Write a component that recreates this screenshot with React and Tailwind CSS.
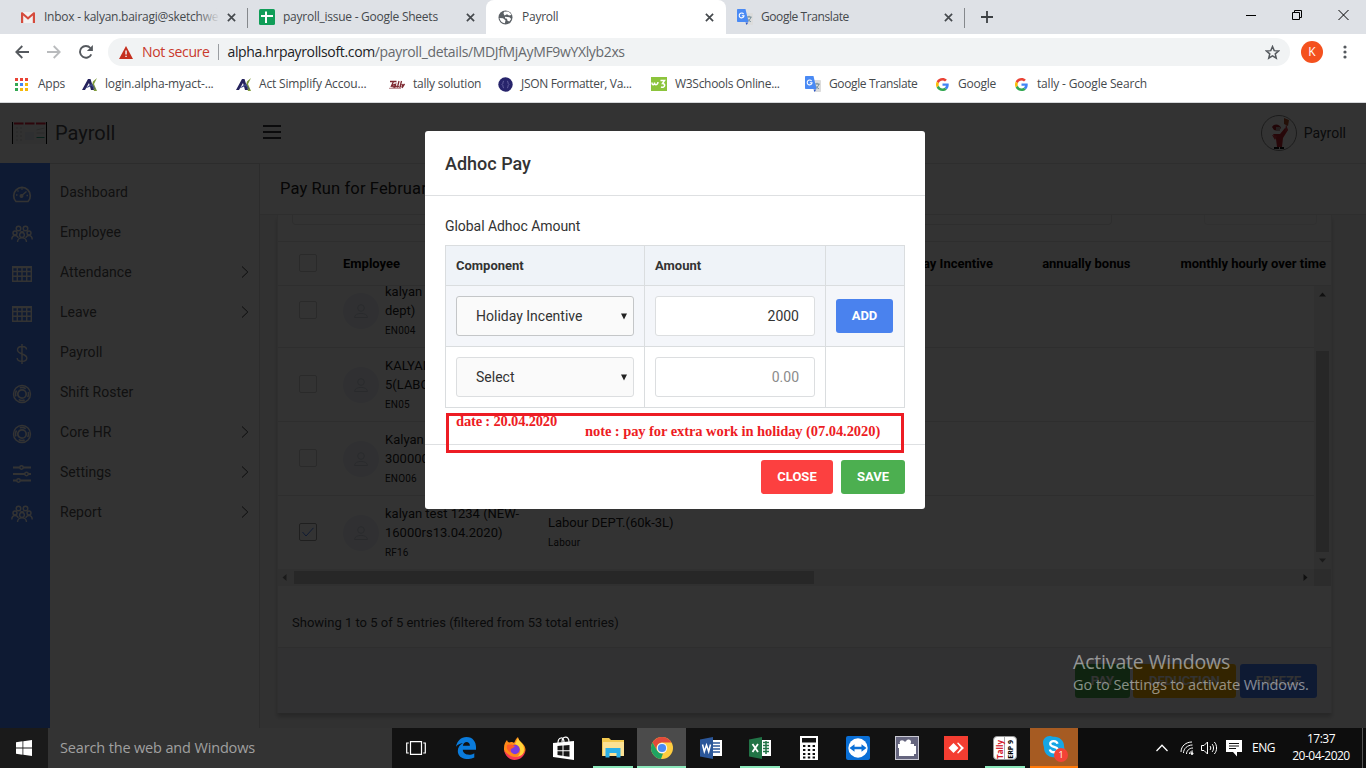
import React from "react";

const CloseX = () => (
  <svg width="9" height="9" viewBox="0 0 9 9" className="shrink-0" stroke="#45494d" strokeWidth="1.7">
    <path d="M.9.9l7.2 7.2M8.1.9L.9 8.1" />
  </svg>
);

const Translate = () => (
  <svg width="16" height="16" viewBox="0 0 16 16" className="shrink-0">
    <path d="M6 4h9.2a.8.8 0 0 1 .8.8v10.4a.8.8 0 0 1-.8.8H9.500z" fill="#dcdcdc" />
    <path d="M9.500 8h5M12 6.800V8M14 8c-.4 2-2 3.600-3.500 4.500M10.500 9.500c.6 1.500 2 2.500 3.300 3.200" stroke="#6f8a94" strokeWidth="1" fill="none" />
    <path d="M8.500 13.500h2.800L9.500 16z" fill="#2a56c6" />
    <path d="M.8 0h7.700l3 13H.8A.8.8 0 0 1 0 12.200V.8A.8.8 0 0 1 .8 0z" fill="#4a8af4" />
    <path d="M6.600 5.100A2.400 2.400 0 1 0 7 6.800H4.800" stroke="#fff" strokeWidth="1.100" fill="none" />
  </svg>
);

const GoogleG = () => (
  <svg width="13" height="13" viewBox="0 0 48 48" className="shrink-0">
    <path fill="#EA4335" d="M24 9.500c3.540 0 6.710 1.220 9.210 3.600l6.850-6.850C35.900 2.380 30.470 0 24 0 14.620 0 6.510 5.380 2.560 13.220l7.980 6.190C12.430 13.720 17.740 9.500 24 9.500z" />
    <path fill="#4285F4" d="M46.980 24.550c0-1.570-.15-3.090-.38-4.550H24v9.020h12.940c-.58 2.960-2.260 5.480-4.780 7.180l7.730 6c4.510-4.180 7.090-10.360 7.090-17.650z" />
    <path fill="#FBBC05" d="M10.530 28.590A14.500 14.500 0 0 1 9.770 24c0-1.600.27-3.140.76-4.590l-7.980-6.190A23.900 23.900 0 0 0 0 24c0 3.880.92 7.540 2.560 10.780l7.970-6.190z" />
    <path fill="#34A853" d="M24 48c6.480 0 11.930-2.130 15.890-5.810l-7.730-6c-2.150 1.450-4.920 2.300-8.160 2.300-6.260 0-11.570-4.220-13.470-9.910l-7.980 6.190C6.510 42.620 14.620 48 24 48z" />
  </svg>
);

const ActLogo = () => (
  <svg width="15" height="13" viewBox="0 0 15 13" className="shrink-0">
    <path d="M11 3.500L15 0l-3 6L15 13h-3l-2-6z" fill="#7f9a3a" />
    <path d="M0 12L6 1h2.500L12 12H9L7 5l-4 7z" fill="#25225c" />
    <path d="M2 11l8-5.500L14 12l-4.500-4z" fill="#3d4688" />
  </svg>
);

function TabStrip() {
  return (
    <div className="flex h-[34px] bg-[#dee1e6] text-[12px] text-[#45494d] tracking-[-0.250px]">
      <div className="relative flex w-[248px] items-center pl-[21px] pr-[11px]">
        <svg width="14" height="11" viewBox="0 0 14 11" className="shrink-0">
          <path d="M1 0h12v11H1z" fill="#f1f1f1" />
          <path d="M0 1.200C0 .4.8 0 1.500.3L7 5l5.500-4.700c.7-.3 1.500.1 1.500.9V11h-2.200V3.600L7 7.700 2.200 3.600V11H0z" fill="#d54b3d" />
        </svg>
        <div className="relative ml-[9px] w-[176px] overflow-hidden whitespace-nowrap">
          Inbox - kalyan.bairagi@sketchwe
          <div className="absolute inset-y-0 right-0 w-6 bg-linear-to-r from-transparent to-[#dee1e6]" />
        </div>
        <div className="ml-auto mr-px"><CloseX /></div>
        <div className="absolute right-0 top-2 h-5 w-px bg-[#85888c]" />
      </div>
      <div className="flex w-[238px] items-center pl-[11px] pr-[11px]">
        <svg width="16" height="16" viewBox="0 0 16 16" className="shrink-0">
          <rect width="16" height="16" rx="1.500" fill="#109d58" />
          <path d="M6 2.500h2v3.500h6v2H8v6H6V8H2V6h4z" fill="#fff" />
        </svg>
        <span className="ml-2">payroll_issue - Google Sheets</span>
        <div className="ml-auto"><CloseX /></div>
      </div>
      <div className="flex h-[34px] w-[240px] items-center rounded-t-lg bg-white pl-3 pr-[12px]">
        <svg width="15" height="15" viewBox="0 0 15 15" className="shrink-0">
          <circle cx="7.500" cy="7.500" r="7" fill="#5b6065" />
          <path d="M1.500 8l3.500.3 2.500 2-.6 3C4.200 13 2 11 1.500 8zM6 1.700l3.500-.2c2 .5 3.500 2 4 3.500l-2.500.5L9 4.300 6.500 5.500 5.500 3.500zM7 6.800l4.500.5 1.700 1.700-1.900 2.500-1.800-.7L9 8.700 7 8.200z" fill="#fff" />
        </svg>
        <span className="ml-[9px]">Payroll</span>
        <div className="ml-auto"><CloseX /></div>
      </div>
      <div className="relative flex w-[239px] items-center pl-[11px] pr-[12px]">
        <Translate />
        <span className="ml-2 tracking-[-0.420px]">Google Translate</span>
        <div className="ml-auto"><CloseX /></div>
        <div className="absolute right-0 top-2 h-5 w-px bg-[#85888c]" />
      </div>
      <div className="flex flex-1 items-center pl-4">
        <svg width="12" height="12" viewBox="0 0 12 12" stroke="#3c4043" strokeWidth="1.800"><path d="M6 0v12M0 6h12" /></svg>
        <div className="mb-[5px] ml-auto mr-[17px] flex items-center gap-9">
          <svg width="10" height="10" viewBox="0 0 10 10" stroke="#000"><path d="M0 5.500h10" /></svg>
          <svg width="10" height="10" viewBox="0 0 10 10" stroke="#000" fill="none"><path d="M.5 2.500h7v7h-7zM2.500 2.500v-2h7v7h-2" /></svg>
          <svg width="11" height="10" viewBox="0 0 11 10" stroke="#000" fill="none"><path d="M.5 0l10 10M10.500 0L.5 10" /></svg>
        </div>
      </div>
    </div>
  );
}

function Toolbar() {
  return (
    <div className="flex h-9 items-center bg-white pl-[15px]">
      <svg width="14" height="14" viewBox="0 0 14 14" fill="none" stroke="#55595e" strokeWidth="1.800"><path d="M14 7H1.500M7.300 1L1.300 7l6 6" /></svg>
      <svg width="14" height="14" viewBox="0 0 14 14" fill="none" stroke="#b9bbbd" strokeWidth="1.800" className="ml-[18px]"><path d="M0 7h12.500M6.700 1l6 6-6 6" /></svg>
      <svg width="14" height="14" viewBox="0 0 14 14" className="ml-[18px]"><path d="M12.300 9.300A5.900 5.900 0 1 1 11.400 3" fill="none" stroke="#55595e" strokeWidth="1.900" /><path d="M13.900 0v6H7.900z" fill="#55595e" /></svg>
      <div className="ml-[15px] flex h-7 w-[1182px] items-center rounded-full bg-[#f1f3f4] pl-[11px] pr-[10px] text-[14px] tracking-[-0.350px] whitespace-pre">
        <svg width="14" height="13" viewBox="0 0 14 13"><path d="M7 0l7 13H0z" fill="#c5301f" /><path d="M6.300 4.500h1.500v4H6.300zM6.300 9.700h1.500v1.400H6.300z" fill="#f1f3f4" /></svg>
        <span className="mb-px ml-[9px] text-[#c9392c]">Not secure</span>
        <div className="ml-2 mr-[9px] h-4 w-px bg-[#9a9da1]" />
        <span className="mb-px text-[#202124]">alpha.hrpayrollsoft.com<span className="text-[#66696d]">/payroll_details/MDJfMjAyMF9wYXlyb2xs</span></span>
        <svg width="15" height="15" viewBox="0 0 24 24" className="ml-auto" fill="none" stroke="#55595e" strokeWidth="2.400"><path d="M12 2.500l2.700 6.500 7 .6-5.300 4.600 1.600 6.900-6-3.700-6 3.700 1.600-6.900L2.300 9.600l7-.6z" /></svg>
      </div>
      <div className="ml-[11px] flex size-[22px] items-center justify-center rounded-full bg-[#f4511e] text-[12px] text-white">K</div>
      <svg width="4" height="14" viewBox="0 0 4 14" fill="#55595e" className="ml-5"><circle cx="2" cy="2" r="1.600" /><circle cx="2" cy="7" r="1.600" /><circle cx="2" cy="12" r="1.600" /></svg>
    </div>
  );
}

const Mark = ({ icon, label, w, gap = "ml-2", track = "" }) => (
  <div className={"flex shrink-0 items-center " + w}>
    {icon}
    <span className={"whitespace-nowrap " + gap + " " + track}>{label}</span>
  </div>
);

function Bookmarks() {
  const dots = ["#e94335", "#e94335", "#e94335", "#34a853", "#4285f4", "#f6b90a", "#34a853", "#f6b90a", "#f6b90a"];
  return (
    <div className="flex h-[33px] border-b border-[#d5d7da] bg-white pb-[4px] pl-[15px] text-[12px] text-[#45494d]">
      <Mark w="w-[67px]" gap="ml-[10px]" track="tracking-[-0.220px]" label="Apps" icon={
        <div className="grid grid-cols-3 gap-[2px]">
          {dots.map((c, i) => <svg key={i} width="3" height="3"><rect width="3" height="3" fill={c} /></svg>)}
        </div>} />
      <Mark w="w-[154px]" track="tracking-[-0.180px]" label="login.alpha-myact-..." icon={<ActLogo />} />
      <Mark w="w-[153px]" track="tracking-[-0.180px]" label="Act Simplify Accou..." icon={<ActLogo />} />
      <Mark w="w-[109px]" track="tracking-[-0.220px]" label="tally solution" icon={
        <svg width="16" height="9" viewBox="0 0 16 9" className="shrink-0" fill="none" stroke="#7d2830" strokeWidth="1.300">
          <path d="M1 1.500h6.500M4.500 1.500L2 7M6 4.500c-2-.5-3 2.500-1.500 2.500S6 5 6.500 4.500L6 7 8 6M10 1L8.500 7l1.500-.5M12.500 1l-1.500 6 1.500-.5M13 4l.5 2L15.500 4 13 8" />
          <path d="M0 8.300h12" strokeWidth=".6" />
        </svg>} />
      <Mark w="w-[153px]" track="tracking-[-0.310px]" label="JSON Formatter, Va..." icon={
        <svg width="15" height="15" viewBox="0 0 15 15" className="shrink-0"><circle cx="7.500" cy="7.500" r="7.200" fill="#27246b" /><path d="M6 4C4.500 4 5.500 7 4 7.500 5.500 8 4.500 11 6 11M9 4c1.500 0 .5 3 2 3.500C9.500 8 10.500 11 9 11" fill="none" stroke="#6d6aa5" strokeWidth=".9" /></svg>} />
      <Mark w="w-[154px]" track="tracking-[-0.290px]" label="W3Schools Online..." icon={
        <svg width="16" height="14" viewBox="0 0 16 14" className="shrink-0"><rect width="16" height="14" fill="#8cc43c" /><path d="M1 5.500c0 3 2.500 3 2.500 0 0 3 3 3 3.500-.5M9.500 3.500h4L11.500 6.500c3.500 0 2.500 5-1.500 3.500" fill="none" stroke="#fff" strokeWidth="1.500" /></svg>} />
      <Mark w="w-[131px]" track="tracking-[-0.380px]" label="Google Translate" icon={<Translate />} />
      <Mark w="w-[79px]" gap="ml-[9px]" track="tracking-[-0.220px]" label="Google" icon={<GoogleG />} />
      <Mark w="w-[150px]" gap="ml-[9px]" track="tracking-[-0.180px]" label="tally - Google Search" icon={<GoogleG />} />
    </div>
  );
}

const S = ({ children }) => (
  <svg width="20" height="20" viewBox="0 0 20 20" fill="none" stroke="#fff" strokeWidth="1.400">{children}</svg>
);
const Gauge = () => (
  <S><path d="M4 17.500a8.300 8.300 0 1 1 12 0z" strokeWidth="1.700" /><path d="M9.500 11.800l5-4.300M4 11h1.500M5.500 6.500l1 1M10 4.200v1.500M14.500 11.500H16" /><circle cx="9.500" cy="12" r="1.300" fill="#fff" /></S>
);
const People = () => (
  <svg width="22" height="18" viewBox="0 0 22 18" fill="none" stroke="#fff" strokeWidth="1.400">
    <circle cx="7.500" cy="3.500" r="2.300" /><circle cx="14.500" cy="3.500" r="2.300" /><circle cx="4" cy="8" r="2" /><circle cx="18" cy="8" r="2" /><circle cx="11" cy="10" r="2.400" />
    <path d="M.8 14.500c0-5 6-5 6.300-1.500M21.200 14.500c0-5-6-5-6.300-1.500M6.500 17c.3-5.500 8.700-5.500 9 0M9 7.500c1-1 3-1 4 0" />
  </svg>
);
const Grid = () => (
  <svg width="20" height="16" viewBox="0 0 20 16" fill="none" stroke="#fff" strokeWidth="1.400">
    <path d="M.7.700h18.600v14.600H.7zM0 1.500h20M0 5.500h20M0 10.300h20M5.300 1v14M10 1v14M14.700 1v14" />
  </svg>
);
const Dollar = () => <S><path d="M10 0v20M14.500 5.500C14.300 1.500 5.500 1.500 5.500 6c0 4.500 9.300 3.500 9.300 8 0 4.500-9.500 4.500-9.600 0" /></S>;
const Ring = () => <S><circle cx="10" cy="10" r="8.500" /><circle cx="10" cy="10" r="4.200" strokeWidth="1.700" /><circle cx="10" cy="10" r="6.500" strokeDasharray="6.200 4" strokeDashoffset="3" strokeWidth="1.600" /></S>;
const Sliders = () => <S><path d="M1 3.500h18M1 10h18M1 16.500h18" strokeWidth="1.800" /><g fill="#4680ff"><circle cx="9.500" cy="3.500" r="1.700" /><circle cx="14.500" cy="10" r="1.700" /><circle cx="6.500" cy="16.500" r="1.700" /></g></S>;

const menu = [
  ["Dashboard", Gauge, false], ["Employee", People, false], ["Attendance", Grid, true], ["Leave", Grid, true],
  ["Payroll", Dollar, false], ["Shift Roster", Ring, false], ["Core HR", Ring, true], ["Settings", Sliders, true], ["Report", People, true],
];

const rows = [
  ["kalyan", "dept)", "EN004"],
  ["KALYAN", "5(LABOUR)", "EN05"],
  ["Kalyan", "300000)", "ENO06"],
  ["kalyan test 1234 (NEW-", "16000rs13.04.2020)", "RF16", true],
];

const Box = ({ on, shift = "" }) => (
  <div className={"flex size-[18px] shrink-0 items-center justify-center rounded-[2px] border " + (on ? "border-[#999] " : "border-[#d0d0d0] ") + shift}>
    {on && <svg width="12" height="10" viewBox="0 0 12 10" fill="none" stroke="#4680ff"><path d="M.5 5l3.500 4L11.500.8" /></svg>}
  </div>
);

const Tri = ({ d, c = "#505050", w = 7, h = 7 }) => <svg width={w} height={h} viewBox={`0 0 ${w} ${h}`} fill={c}><path d={d} /></svg>;

function PayrollPage() {
  return (
    <div className="flex h-full flex-col bg-white font-['Roboto',sans-serif] text-[#373a3c]">
      <div className="flex h-[60px] shrink-0 items-center pl-3 pr-5">
        <svg width="35" height="22" viewBox="0 0 35 22">
          <rect width="35" height="22" fill="#f4f4f4" /><path d="M.5 0v22M34.500 0v22" stroke="#000" />
          <path d="M2 1.500h9.500M13 1.500h9.500M24 1.500h9.500" stroke="#e1203c" strokeWidth="2" />
          <path d="M4 6h2M8 6h2M4 10h2M8 10h2M4 14h2M8 14h2M4 18h2M8 18h2" stroke="#ccc" /><path d="M13 10h9v8h-9z" fill="#e4e9f5" /><path d="M24.500 8l8-2M24.500 11h8" stroke="#ccc" /><path d="M24.500 15.500h8" stroke="#2aa889" />
        </svg>
        <span className="ml-[8px] text-[20px] text-[#4a4d50]">Payroll</span>
        <svg width="18" height="14" viewBox="0 0 18 14" stroke="#373a3c" strokeWidth="2" className="-mt-[2px] ml-[148px]"><path d="M0 1h18M0 7h18M0 13h18" /></svg>
        <svg width="36" height="36" viewBox="0 0 36 36" className="ml-auto">
          <circle cx="18" cy="18" r="17.500" fill="#fff" stroke="#888" />
          <path d="M12 19l3 5 1 8h5l1-9 5-8-3-2-5 6z" fill="#c4262e" /><path d="M11 12c2-4 8-3 9 1l-3 3-4-1z" fill="#a3202a" /><path d="M15 12h4v4h-4z" fill="#b99" /><path d="M23 3l5 2-1 6-4-2z" fill="#b5502c" /><path d="M25 9l2 6-3 2zM11 20l5 1-2 4z" fill="#d53842" /><path d="M13 33h5M19 33h4" stroke="#111" strokeWidth="2" />
        </svg>
        <span className="ml-[7px] text-[14px]">Payroll</span>
      </div>
      <div className="flex min-h-0 flex-1">
        <div className="flex w-[50px] shrink-0 flex-col bg-[#4680ff] pr-[6px] pt-[11px]">
          {menu.map(([n, Icon], i) => <div key={i} className="flex h-10 items-center justify-center"><Icon /></div>)}
        </div>
        <div className="w-[210px] shrink-0 border-r border-t border-[#ddd] pt-[8px] text-[#555]">
          {menu.map(([n, , arrow], i) => (
            <div key={i} className="flex h-10 items-center justify-between pl-[10px] pr-[10px] text-[14px] tracking-[0.030px]">
              <span>{n}</span>
              {arrow && <svg width="8" height="12" viewBox="0 0 8 12" fill="none" stroke="#373a3c" className="mb-px"><path d="M1 .5L6.800 6 1 11.500" /></svg>}
            </div>
          ))}
        </div>
        <div className="flex min-w-0 flex-1 flex-col bg-[#f5f5f5]">
          <div className="flex h-[52px] shrink-0 items-center border-y border-[#e3e3e3] bg-white pl-5 text-[16.500px] tracking-[0.120px] text-[#222]">Pay Run for February 2020</div>
          <div className="mb-[15px] ml-[17px] mr-[34px] flex min-h-0 flex-1 flex-col border-x border-[#ececec] bg-white shadow-[0_4px_4px_rgba(0,0,0,0.2)]">
            <div className="flex h-[26px] shrink-0 items-start gap-[92px] px-[14px]">
              <div className="h-[10px] w-[820px] rounded-b border border-t-0 border-[#e6e6e6]" />
              <div className="h-[10px] flex-1 rounded-b border border-t-0 border-[#f0f0f0]" />
            </div>
            <div className="flex h-[45px] shrink-0 items-center border-y border-[#e3e3e3] pl-[21px] pr-[5px] text-[13px] font-bold text-black">
              <Box shift="-mt-[2px]" />
              <span className="ml-[26px]">Employee</span>
              <span className="ml-auto w-[112px] text-right">Holiday Incentive</span>
              <span className="ml-[49px]">annually bonus</span>
              <span className="ml-[50px]">monthly hourly over time</span>
            </div>
            <div className="flex h-[283px] shrink-0">
              <div className="flex min-w-0 flex-1 flex-col justify-end overflow-hidden">
                {rows.map(([a, b, code, on], i) => (
                  <div key={i} className="flex h-[74px] shrink-0 items-center border-t border-[#e3e3e3] pl-[21px] pt-px">
                    <Box on={on} shift="-mt-[2px]" />
                    <div className="ml-[26px] flex size-9 shrink-0 items-center justify-center rounded-full bg-[#edf0fa]">
                      <svg width="14" height="14" viewBox="0 0 14 14" fill="none" stroke="#cdd0dc"><circle cx="7" cy="4" r="3.300" /><path d="M.5 13.500C.5 8 13.500 8 13.500 13.500z" /></svg>
                    </div>
                    <div className="ml-[6px] w-[163px] whitespace-nowrap pt-px text-[13px] leading-[19px] text-[#222]">
                      <div>{a}</div><div>{b}</div><div className="mt-px text-[10px] leading-[20px] tracking-[0.180px]">{code}</div>
                    </div>
                    {on && <div className="text-[13px] leading-[20px] text-[#222]"><div>Labour DEPT.(60k-3L)</div><div className="text-[10px] tracking-[0.200px]">Labour</div></div>}
                  </div>
                ))}
              </div>
              <div className="flex w-[17px] shrink-0 flex-col items-center bg-[#f1f1f1]">
                <div className="flex h-[17px] items-center"><Tri d="M0 5.500L3.500 1.500 7 5.500z" /></div>
                <div className="mt-[48px] h-[201px] w-[13px] bg-[#c1c1c1]" />
                <div className="mt-auto flex h-[17px] items-center"><Tri d="M0 1.500h7L3.500 5.500z" c="#808080" /></div>
              </div>
            </div>
            <div className="flex h-[17px] shrink-0 items-center bg-[#f1f1f1]">
              <div className="flex w-4 justify-center pr-[3px]"><Tri d="M5.500 0v7L1.500 3.500z" c="#808080" /></div>
              <div className="h-[13px] w-[520px] bg-[#c1c1c1]" />
              <div className="ml-auto flex w-[17px] justify-center"><Tri d="M1.500 0v7L5.500 3.500z" /></div>
              <div className="h-[17px] w-[17px] bg-[#dcdcdc]" />
            </div>
            <div className="flex h-[62px] shrink-0 items-center border-b border-[#e3e3e3] pl-[14px] pt-[12px] text-[13px]">Showing 1 to 5 of 5 entries (filtered from 53 total entries)</div>
            <div className="flex flex-1 items-center justify-end bg-[#f5f6fa] pr-[14px] text-[13px] font-bold text-white">
              <div className="mr-[3px] flex h-[34px] w-[55px] items-center justify-center rounded-[3px] bg-[#4caf50]">PAY</div>
              <div className="mr-1 flex h-[34px] w-[103px] items-center justify-center rounded-[3px] bg-[#ffb400]">DEDUCTION</div>
              <div className="flex h-[34px] w-[77px] items-center justify-center rounded-[3px] bg-[#4680ff]">FREEZE</div>
            </div>
          </div>
        </div>
      </div>
    </div>
  );
}

const Select = ({ label, active }) => (
  <div className={"flex h-10 items-center justify-between rounded-[3px] border bg-[#fafafa] pl-[19px] pr-[6px] text-[14px] " + (active ? "border-[#c4c6c8]" : "border-[#dcdee0]")}>
    {label}
    <svg width="6" height="7" viewBox="0 0 6 7" fill="#222"><path d="M0 .500h6L3 6.500z" /></svg>
  </div>
);

function AdhocModal() {
  return (
    <div className="absolute left-[425px] top-[28px] flex h-[378px] w-[500px] flex-col rounded-[3px] bg-white font-['Roboto',sans-serif] text-[#333]">
      <div className="flex h-[65px] shrink-0 items-center border-b border-[#dee0e2] pl-5 text-[18px] font-medium">Adhoc Pay</div>
      <div className="h-[249px] shrink-0 border-b border-[#dee0e2] px-5 pt-[20px]">
        <div className="h-[29px] text-[14px] leading-[21px] tracking-[-0.050px]">Global Adhoc Amount</div>
        <div className="grid w-[460px] grid-cols-[199px_181px_79px] grid-rows-[40px_61px_61px] border-r border-b border-[#dadddf] [&>div]:border-l [&>div]:border-t [&>div]:border-[#dadddf]">
          <div className="flex items-center bg-[#eff3f8] pl-[10px] text-[13px] font-bold">Component</div>
          <div className="flex items-center bg-[#eff3f8] pl-[10px] text-[13px] font-bold">Amount</div>
          <div className="bg-[#eff3f8]" />
          <div className="bg-[#f4f6fa] p-[10px]"><Select label="Holiday Incentive" active /></div>
          <div className="bg-[#f4f6fa] p-[10px]"><div className="flex h-10 items-center justify-end rounded-[3px] border border-[#dcdee0] bg-white pr-[15px] text-[14px]">2000</div></div>
          <div className="bg-[#f4f6fa] px-[10px] py-[13px]"><div className="flex h-[34px] w-[57px] items-center justify-center rounded-[3px] bg-[#4a82ee] text-[13px] font-bold text-white">ADD</div></div>
          <div className="p-[10px]"><Select label="Select" /></div>
          <div className="p-[10px]"><div className="flex h-10 items-center justify-end rounded-[3px] border border-[#dcdee0] bg-white pr-[15px] text-[14px] text-[#8b8b8b]">0.00</div></div>
          <div />
        </div>
      </div>
      <div className="flex justify-end gap-2 pr-5 pt-[15px] text-[13px] font-bold text-white">
        <div className="flex h-[34px] w-[72px] items-center justify-center rounded-[3px] bg-[#fc4040]">CLOSE</div>
        <div className="flex h-[34px] w-[64px] items-center justify-center rounded-[3px] bg-[#4caf50]">SAVE</div>
      </div>
      <div className="absolute left-[21px] top-[282px] flex h-[40px] w-[458px] border-[3px] border-[#ed1c24] font-['Liberation_Serif',serif] text-[14.500px] font-bold leading-4 text-[#ed1c24] whitespace-nowrap">
        <span className="ml-[7px] mt-[-3px] w-[129px] tracking-[-0.170px]">date : 20.04.2020</span>
        <span className="mt-[7px] tracking-[-0.070px]">note : pay for extra work in holiday (07.04.2020)</span>
      </div>
    </div>
  );
}

const TaskApp = ({ children, bg = "", line = "" }) => (
  <div className={"relative flex h-10 w-[49px] shrink-0 items-center justify-center " + bg}>
    {children}
    {line && <div className={"absolute bottom-0 h-[2px] " + line} />}
  </div>
);

function Taskbar() {
  return (
    <div className="flex h-10 bg-[#0d0d0d] text-white">
      <div className="flex w-12 items-center justify-center bg-[#1a1a1a]">
        <svg width="16" height="16" viewBox="0 0 16 16" fill="#fff"><path d="M0 2.300L6.500 1.300v6.300H0zM7.300 1.200L16 0v7.600H7.300zM0 8.400h6.500v6.300L0 13.700zM7.300 8.400H16V16l-8.700-1.200z" /></svg>
      </div>
      <div className="flex w-[344px] items-center bg-[#333] pl-3 text-[14.500px] tracking-[-0.150px] text-[#a0a0a0]">Search the web and Windows</div>
      <div className="flex w-[638px] bg-[#121212] text-white">
        <TaskApp>
          <svg width="20" height="14" viewBox="0 0 20 14" fill="none" stroke="#fff" strokeWidth="1.200" className="mr-px"><path d="M4.500.700h11v12.600h-11zM2.800 2H.7v10h2.100M17.200 2h2.100v10h-2.100" /></svg>
        </TaskApp>
        <TaskApp>
          <svg width="20" height="22" viewBox="0 0 20 22"><path d="M0 9.800C1 4 5 0 10.500 0 17 0 20 5 20 10v2.800H6.800c.3 5.200 7.200 6.200 11.500 3.400v4.300C11 24 1.800 21.500 1.800 14c0-3.500 2-6.500 5.200-8C4.300 6.200 1.500 7.700 0 9.800zM6.900 8.800h7C14 3.500 7.200 4 6.900 8.800z" fill="#0a7bdb" /></svg>
        </TaskApp>
        <TaskApp>
          <svg width="23" height="23" viewBox="0 0 23 23">
            <path d="M1 11c0-4 1.500-6 3-8 .5 1.500 1 2 2 2.500C8 4.500 10 5 11 6c1-2 2-4.500 4-6 .5 3 2 4 4 6 2 1.700 3.500 4 3.500 7A11 10.500 0 0 1 1 13z" fill="#ff8a18" />
            <path d="M15 1c.5 3 6 5 6 11s-4 9.500-9 9.500C20 17 18 9 12 7c1-2 2-4 3-6z" fill="#ffd43a" />
            <path d="M1 13c1 5.500 5 10 10.500 10S22 19 22.500 13c-2 5-6 7-10.500 7S3 16 1 13z" fill="#f83a53" />
            <circle cx="12" cy="12.500" r="4.700" fill="#7b3be0" /><path d="M4 8c3-1 6-.5 8 1.500l-3 2c-2 0-2 3-1 4-3-1-5-4-4-7.500z" fill="#ff5a28" />
          </svg>
        </TaskApp>
        <TaskApp>
          <svg width="21" height="24" viewBox="0 0 21 24"><path d="M0 7l21-2v19L0 21z" fill="#fff" /><path d="M5 7c0-6 6-7 6-1M9 6c0-6 7-7 7 0" fill="none" stroke="#fff" strokeWidth="1.200" /><path d="M4.500 10l5-.4v4.700h-5zM10.500 9.500l6-.5v5.300h-6zM4.500 15.300h5v4.500l-5-.7zM10.500 15.300h6v5.500l-6-.8z" fill="#161616" /></svg>
        </TaskApp>
        <TaskApp line="w-10 bg-[#8ce8bb]">
          <svg width="22" height="20" viewBox="0 0 22 20"><path d="M0 0h7l2 2h13v16H0z" fill="#f3c94f" /><path d="M1 4h21v14H1z" fill="#fbe194" /><path d="M3.500 10h15v9.500h-4V15h-7v4.500h-4z" fill="#2bb0e8" /></svg>
        </TaskApp>
        <TaskApp bg="bg-[#4b4b4b]" line="w-[49px] bg-[#8ce8bb]">
          <svg width="22" height="22" viewBox="0 0 22 22"><circle cx="11" cy="11" r="11" fill="#ffcd40" /><path d="M1.500 5.500A11 11 0 0 1 20.500 5.500H11a5.500 5.500 0 0 0-4.800 8.200z" fill="#e24a3b" /><path d="M1.500 5.500l4.700 8.200A5.500 5.500 0 0 0 12 16.400L10 22A11 11 0 0 1 1.500 5.500z" fill="#1fa463" /><circle cx="11" cy="11" r="5.200" fill="#f4f4f4" /><circle cx="11" cy="11" r="4.100" fill="#4a89f3" /></svg>
        </TaskApp>
        <TaskApp>
          <svg width="22" height="22" viewBox="0 0 22 22"><path d="M11 3h11v16H11z" fill="#fff" /><path d="M13 6h7M13 9h7M13 12h7M13 15h7" stroke="#2b579a" strokeWidth="1.300" /><path d="M0 2.500L13 0v22L0 19.500z" fill="#2b579a" /><path d="M2.500 7.500l1.800 7L6.500 8l2.200 6.500 1.800-7" fill="none" stroke="#fff" strokeWidth="1.500" /></svg>
        </TaskApp>
        <TaskApp line="w-10 bg-[#8ce8bb]">
          <svg width="22" height="22" viewBox="0 0 22 22"><path d="M11 3h11v16H11z" fill="#fff" /><path d="M14 5.500h6M14 8.500h6M14 11.500h6M14 14.500h6M17 4v13" stroke="#217346" strokeWidth="1.500" /><path d="M0 2.500L13 0v22L0 19.500z" fill="#217346" /><path d="M3.500 7l5.500 8M9 7l-5.500 8" stroke="#fff" strokeWidth="1.800" /></svg>
        </TaskApp>
        <TaskApp>
          <svg width="18" height="24" viewBox="0 0 18 24"><path d="M0 0h18v24H0z" fill="#fff" /><path d="M2 2h14v4.500H2z" fill="#111" /><path d="M3 10h12M3 14h12M3 18h12M3 21.500h12" stroke="#111" strokeWidth="2.200" strokeDasharray="2.400 2.400" /></svg>
        </TaskApp>
        <TaskApp>
          <svg width="24" height="24" viewBox="0 0 24 24"><rect width="24" height="24" rx="2" fill="#0a6fd6" /><circle cx="12" cy="12" r="9.700" fill="#fff" /><path d="M3.500 12l5-3.700v2.400h7V8.300l5 3.700-5 3.700v-2.400h-7v2.400z" fill="#0a6fd6" /></svg>
        </TaskApp>
        <TaskApp>
          <svg width="24" height="24" viewBox="0 0 24 24"><rect x=".5" y=".5" width="23" height="23" fill="#65657e" stroke="#c9c9d3" /><path d="M3 8h2V5.500h9V8h5v12H4V12H3zM19 10h2v8h-2z" fill="#fff" /><circle cx="7" cy="6.500" r="2.300" fill="#fff" /><circle cx="13.500" cy="6" r="2.500" fill="#fff" /></svg>
        </TaskApp>
        <TaskApp>
          <svg width="24" height="24" viewBox="0 0 24 24"><rect width="24" height="24" fill="#f43d31" /><path d="M9.500 7l5 5-5 5-5-5z" fill="#fff" /><path d="M13 7l1.200-.5L20 12l-5.800 5.500L13 17l4-5z" fill="#fff" /></svg>
        </TaskApp>
        <TaskApp line="w-10 bg-[#8ce8bb]">
          <div className="flex h-6 w-6 rounded-sm border border-[#999] bg-white text-[8px] font-bold leading-[11px]">
            <span className="w-[11px] border-r border-[#aaa] text-[#d4202c] [writing-mode:sideways-lr]">Tally</span>
            <span className="w-[11px] text-[7px] text-black [writing-mode:sideways-lr]">ERP 9</span>
          </div>
        </TaskApp>
      </div>
      <div className="relative flex w-12 items-center justify-center border-b-2 border-[#ff7a0a] bg-[#a65b22]">
        <svg width="22" height="22" viewBox="0 0 22 22"><path d="M6.500 0c2 0 3 .8 5 .8 5 0 9.500 4 9.500 9 0 2 .8 3 .8 5.500 0 3.500-3 6.700-6.500 6.700-2 0-3-.8-5-.8C5 21.200 1 17 1 12c0-2-1-3-1-5.500C0 3 3 0 6.500 0z" fill="#16a6e4" /><path d="M14.500 7.800C13.500 4 7 4.500 7.200 8c.2 3.800 7.500 2 7.500 5.700 0 3.300-7 3.500-7.900-.2" fill="none" stroke="#fff" strokeWidth="2.300" /></svg>
        <div className="absolute bottom-[4px] right-[10px] flex size-[14px] items-center justify-center rounded-full bg-[#f44336] text-[9px]">1</div>
      </div>
      <div className="flex flex-1 items-center pl-[78px]">
        <svg width="12" height="8" viewBox="0 0 12 8" fill="none" stroke="#fff" strokeWidth="1.300"><path d="M.5 7L6 1.300 11.500 7" /></svg>
        <svg width="14" height="14" viewBox="0 0 14 14" fill="none" stroke="#fff" className="ml-[12px]"><path d="M1 11C1 5 6 1 12 1M3.500 12c0-4.500 4-8 9-8M6.500 13c0-3 2.500-6 6.500-6M9.500 13c0-1.500 1-3 3.500-3" /><circle cx="12" cy="12.500" r="1" fill="#fff" /></svg>
        <svg width="17" height="14" viewBox="0 0 17 14" fill="none" stroke="#fff" className="ml-[7px]"><path d="M.5 4.500H3L6.500 1v12L3 9.500H.5zM9 5c1 1 1 3 0 4M11 3c2 2 2 6 0 8M13.300 1c3 3 3 9 0 12" /></svg>
        <svg width="16" height="17" viewBox="0 0 16 17" className="ml-2"><path d="M0 0h16v12h-5v4.500L7 12H0z" fill="#fff" /><path d="M3 3.500h10M3 6h10M3 8.500h7" stroke="#111" /></svg>
        <span className="ml-[10px] w-[24px] text-[12px] tracking-[-0.500px]">ENG</span>
        <div className="-mt-[2px] ml-[14px] w-[62px] text-center text-[12px] leading-[17px] tracking-[-0.520px]"><div>17:37</div><div>20-04-2020</div></div>
        <div className="ml-auto mr-[3px] h-10 w-px bg-[#555]" />
      </div>
    </div>
  );
}

export default function App() {
  return (
    <div className="flex h-[768px] w-[1366px] flex-col overflow-hidden font-['Open_Sans',sans-serif]">
      <TabStrip />
      <Toolbar />
      <Bookmarks />
      <div className="relative h-[625px] shrink-0">
        <PayrollPage />
        <div className="absolute inset-0 bg-black/80" />
        <AdhocModal />
        <div className="absolute left-[1073px] top-[546px] whitespace-nowrap text-white/50">
          <div className="text-[19.500px] leading-[26px] tracking-[-0.180px]">Activate Windows</div>
          <div className="text-[14.500px] leading-[20px] tracking-[-0.050px]">Go to Settings to activate Windows.</div>
        </div>
      </div>
      <Taskbar />
    </div>
  );
}
